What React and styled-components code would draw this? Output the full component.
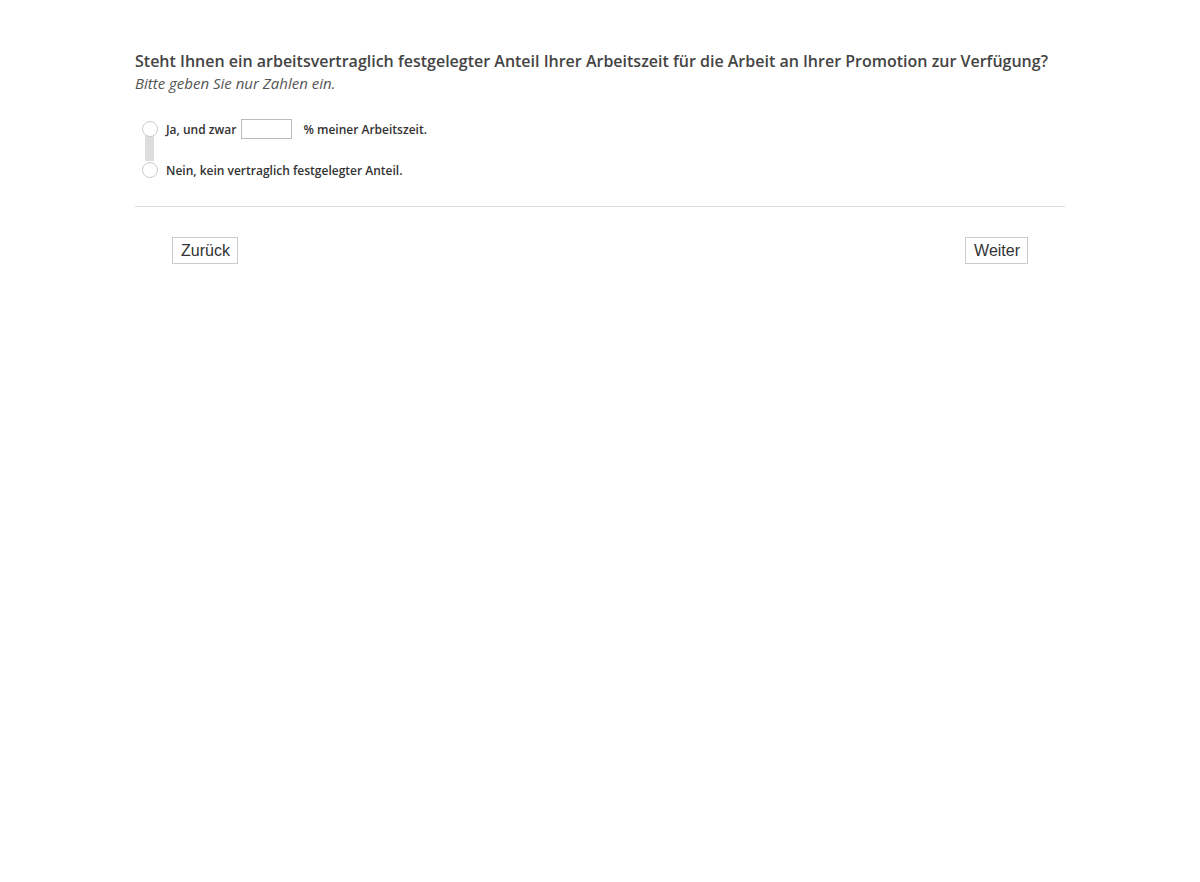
import React from "react";
import styled, { createGlobalStyle } from "styled-components";

const GlobalStyle = createGlobalStyle`
  body {
    margin: 0;
    background: #fff;
    font-family: "Open Sans", sans-serif;
    color: #444;
  }
`;

const Page = styled.div`
  width: 930px;
  margin: 0 auto;
  padding-top: 50px;
`;

const Question = styled.h2`
  margin: 0;
  font-size: 16px;
  font-weight: 600;
  line-height: 22px;
  color: #444;
`;

const Hint = styled.p`
  margin: 0;
  font-size: 15px;
  font-style: italic;
  line-height: 22px;
  color: #555;
`;

const Options = styled.div`
  position: relative;
  margin: 25px 0 0 7px;
  display: flex;
  flex-direction: column;
  gap: 21px;
`;

const Connector = styled.div`
  position: absolute;
  left: 3px;
  top: 14px;
  width: 9px;
  height: 28px;
  background: #ddd;
`;

const Option = styled.label`
  position: relative;
  display: flex;
  align-items: center;
  height: 20px;
  font-size: 12px;
  font-weight: 600;
  color: #333;
`;

const Radio = styled.span`
  width: 16px;
  height: 16px;
  border: 1px solid #ccc;
  border-radius: 50%;
  background: #fff;
  margin-right: 8px;
  box-sizing: border-box;
  flex-shrink: 0;
`;

const NumberInput = styled.input`
  width: 51px;
  height: 20px;
  box-sizing: border-box;
  border: 1px solid #bbb;
  margin: 0 11px 0 5px;
  padding: 0 4px;
  font: inherit;
`;

const Divider = styled.hr`
  margin: 26px 0 0;
  border: 0;
  border-top: 1px solid #ddd;
`;

const Nav = styled.div`
  display: flex;
  justify-content: space-between;
  padding: 30px 37px 0;
`;

const NavButton = styled.button`
  font-family: "Liberation Sans", Arial, sans-serif;
  font-size: 16px;
  color: #333;
  background: #fff;
  border: 1px solid #ccc;
  padding: 3px 7px 3px 8px;
  line-height: 19px;
  cursor: pointer;
`;

export default function App() {
  return (
    <>
      <GlobalStyle />
      <Page>
        <Question>
          Steht Ihnen ein arbeitsvertraglich festgelegter Anteil Ihrer Arbeitszeit für die Arbeit an Ihrer Promotion zur Verfügung?
        </Question>
        <Hint>Bitte geben Sie nur Zahlen ein.</Hint>
        <Options>
          <Connector />
          <Option>
            <Radio />
            Ja, und zwar
            <NumberInput type="text" />
            % meiner Arbeitszeit.
          </Option>
          <Option>
            <Radio />
            Nein, kein vertraglich festgelegter Anteil.
          </Option>
        </Options>
        <Divider />
        <Nav>
          <NavButton>Zurück</NavButton>
          <NavButton>Weiter</NavButton>
        </Nav>
      </Page>
    </>
  );
}
